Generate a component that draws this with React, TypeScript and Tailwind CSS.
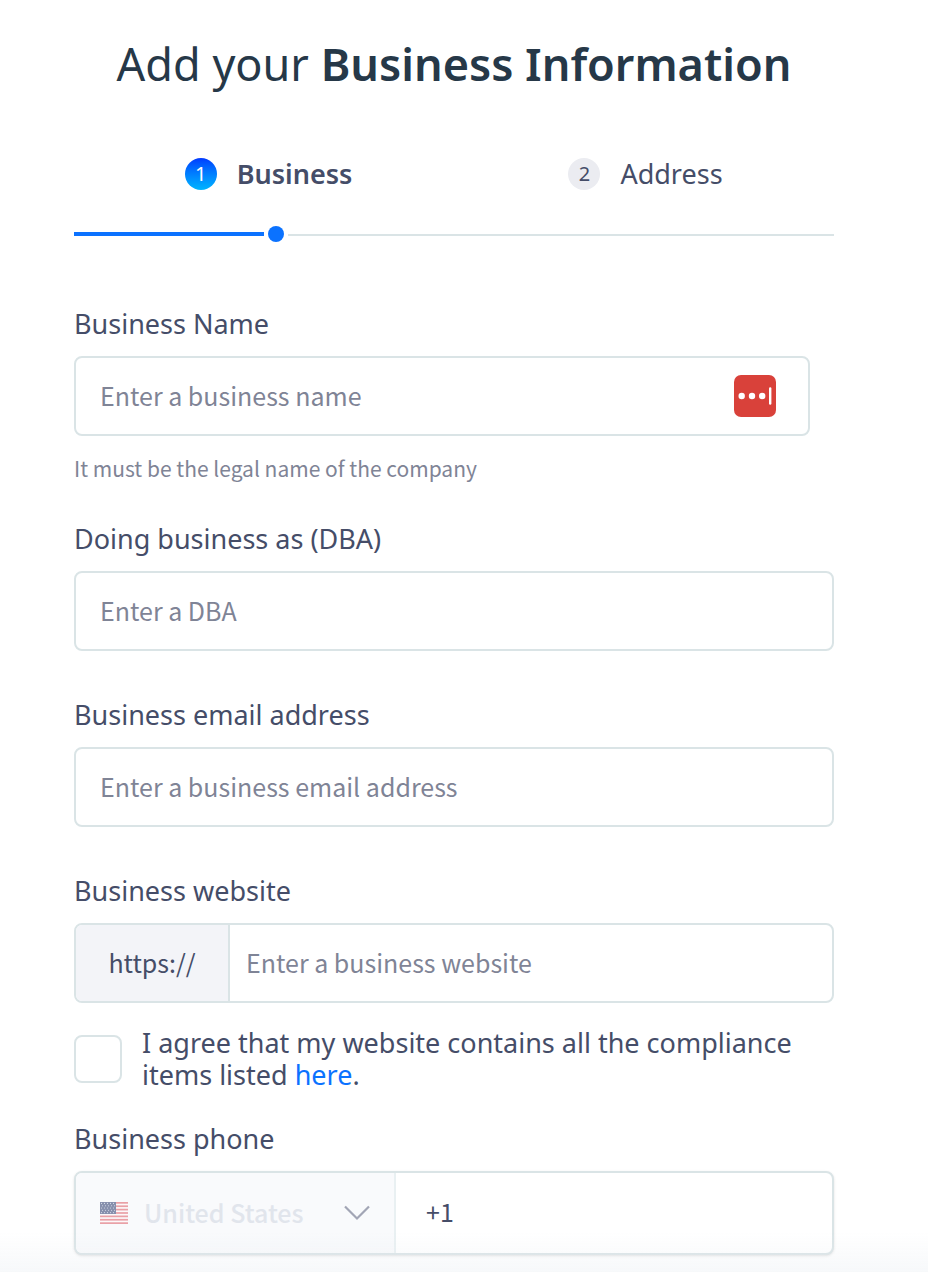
import type { ReactNode } from "react";

const inputText =
  "font-['Noto_Sans_CJK_SC','Noto_Sans',sans-serif] text-[25px] leading-8 text-[#454d68] placeholder:text-[#7f8496] placeholder:opacity-100 outline-none";

const boxed = "h-20 w-full rounded-lg border-2 border-[#dae4e6] bg-white px-6 pb-0.5 focus:border-[#0b72ff]";

function Label({ htmlFor, children }: { htmlFor: string; children: ReactNode }) {
  return (
    <label htmlFor={htmlFor} className="mb-4 block text-[27px] leading-8">
      {children}
    </label>
  );
}

function PasswordManagerIcon() {
  return (
    <svg width="42" height="42" viewBox="0 0 42 42" aria-hidden="true">
      <rect width="42" height="42" rx="7" fill="#d9413a" />
      <circle cx="7.7" cy="21" r="3.2" fill="#fff" />
      <circle cx="18" cy="21" r="3.2" fill="#fff" />
      <circle cx="28.2" cy="21" r="3.2" fill="#fff" />
      <rect x="35" y="12.3" width="2.4" height="17.4" rx="1.2" fill="#fff" />
    </svg>
  );
}

const stripes = [0, 1, 2, 3, 4, 5, 6];
const starRows = [0, 1, 2, 3, 4];
const starCols = [0, 1, 2, 3, 4];

function UsFlag() {
  return (
    <svg width="28" height="22" viewBox="0 0 28 22" className="shrink-0" aria-hidden="true">
      <rect width="28" height="22" fill="#fcf8f9" />
      {stripes.map((i) => (
        <rect key={i} y={i * 3.38} width="28" height="1.7" fill="#e9a0a6" />
      ))}
      <rect width="16" height="12" fill="#8790ad" />
      {starRows.map((r) =>
        starCols.map((c) => (
          <circle key={`${r}-${c}`} cx={1.5 + c * 3 + (r % 2)} cy={1.4 + r * 2.3} r="0.55" fill="#d5dae6" />
        )),
      )}
    </svg>
  );
}

export default function App() {
  return (
    <main className="min-h-screen bg-white pt-8 pr-[94px] pb-4 pl-[74px] font-['Noto_Sans','Open_Sans',sans-serif] text-[#454d68]">
      <h1 className="text-center text-[45px] leading-16 text-[#263848]">
        Add your <strong className="font-semibold">Business Information</strong>
      </h1>

      <ol className="mt-[62px] grid grid-cols-2 pl-1.5 text-[27px] leading-8">
        <li className="flex items-center justify-center gap-5" aria-current="step">
          <span className="flex size-8 items-center justify-center rounded-full bg-linear-to-b from-[#0838ff] to-[#0bb4ff] text-[20px] text-white">
            1
          </span>
          <span className="font-semibold">Business</span>
        </li>
        <li className="flex items-center justify-center gap-5">
          <span className="flex size-8 items-center justify-center rounded-full bg-[#ebecf1] text-[20px]">2</span>
          <span>Address</span>
        </li>
      </ol>

      <div className="mt-9 flex items-center gap-1">
        <div className="h-1 w-1/4 bg-[#0b72ff]" />
        <div className="size-4 rounded-full bg-[#0b72ff]" />
        <div className="h-1 flex-1 border-b-2 border-[#dae4e6]" />
      </div>

      <form className="mt-[66px]">
        <div>
          <Label htmlFor="name">Business Name</Label>
          <div className="mr-6 flex h-20 items-center rounded-lg border-2 border-[#dae4e6] bg-white pr-8 pl-6">
            <input id="name" type="text" placeholder="Enter a business name" className={`${inputText} h-full min-w-0 flex-1 pb-0.5`} />
            <button type="button" aria-label="Fill from password manager">
              <PasswordManagerIcon />
            </button>
          </div>
          <p className="mt-5 font-['Noto_Sans_CJK_SC','Noto_Sans',sans-serif] text-[21px] leading-6 text-[#7f8496]">
            It must be the legal name of the company
          </p>
        </div>

        <div className="mt-[43px]">
          <Label htmlFor="dba">Doing business as (DBA)</Label>
          <input id="dba" type="text" placeholder="Enter a DBA" className={`${inputText} ${boxed}`} />
        </div>

        <div className="mt-12">
          <Label htmlFor="email">Business email address</Label>
          <input id="email" type="email" placeholder="Enter a business email address" className={`${inputText} ${boxed}`} />
        </div>

        <div className="mt-12">
          <Label htmlFor="website">Business website</Label>
          <div className="flex h-20 overflow-hidden rounded-lg border-2 border-[#dae4e6] bg-white">
            <span className="flex w-[154px] items-center justify-center border-r-2 border-[#dae4e6] bg-[#f3f4f8] font-['Noto_Sans_CJK_SC','Noto_Sans',sans-serif] text-[25px]">
              https://
            </span>
            <input id="website" type="text" placeholder="Enter a business website" className={`${inputText} min-w-0 flex-1 px-4 pb-0.5`} />
          </div>
        </div>

        <div className="mt-6 flex items-center gap-5">
          <input
            id="agree"
            type="checkbox"
            className="size-12 shrink-0 appearance-none rounded-lg border-2 border-[#dae4e6] bg-white checked:bg-[#0b72ff]"
          />
          <label htmlFor="agree" className="text-[27px] leading-8">
            I agree that my website contains all the compliance items listed{" "}
            <a href="#compliance" className="text-[#0b72ff]">
              here
            </a>
            .
          </label>
        </div>

        <div className="mt-8">
          <Label htmlFor="phone">Business phone</Label>
          <div className="flex h-[84px] overflow-hidden rounded-lg border-2 border-[#dae4e6] bg-white shadow-sm">
            <div className="flex w-80 items-center gap-4 border-r-2 border-[#e9f0f2] bg-[#f9fafc] px-6">
              <UsFlag />
              <select
                aria-label="Country"
                disabled
                className="min-w-0 flex-1 appearance-none pb-0.5 font-['Noto_Sans_CJK_SC','Noto_Sans',sans-serif] text-[25px] leading-8 font-medium text-[#e1e5ec] opacity-100"
              >
                <option>United States</option>
              </select>
              <svg width="26" height="16" viewBox="0 0 26 16" fill="none" className="shrink-0" aria-hidden="true">
                <path d="M1 1.5 13 13.5 25 1.5" stroke="#a2a5b5" strokeWidth="2.2" />
              </svg>
            </div>
            <input id="phone" type="tel" defaultValue="+1" className={`${inputText} min-w-0 flex-1 px-7.5 pb-1`} />
          </div>
        </div>
      </form>

      <div className="pointer-events-none fixed inset-x-0 bottom-0 h-10 bg-linear-to-b from-transparent to-[#e9eef360]" />
    </main>
  );
}
